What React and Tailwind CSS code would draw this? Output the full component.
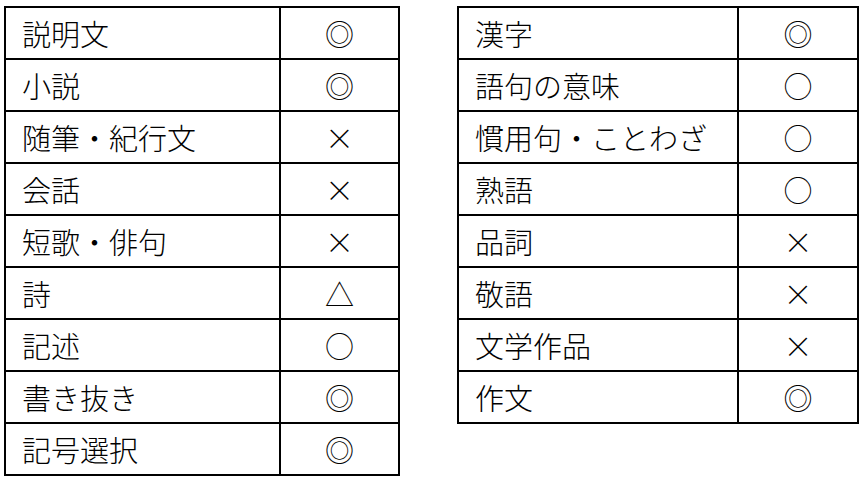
import React from "react";

const left = [
  ["説明文", "◎"],
  ["小説", "◎"],
  ["随筆・紀行文", "×"],
  ["会話", "×"],
  ["短歌・俳句", "×"],
  ["詩", "△"],
  ["記述", "○"],
  ["書き抜き", "◎"],
  ["記号選択", "◎"],
];

const right = [
  ["漢字", "◎"],
  ["語句の意味", "○"],
  ["慣用句・ことわざ", "○"],
  ["熟語", "○"],
  ["品詞", "×"],
  ["敬語", "×"],
  ["文学作品", "×"],
  ["作文", "◎"],
];

function Table({ rows, widthClass, col2Class }) {
  return (
    <div className={"border-2 border-black flex flex-col " + widthClass}>
      {rows.map(([label, mark], i) => (
        <div
          key={i}
          className={
            i === 0
              ? "flex h-[50px]"
              : "flex h-[52px] border-t-2 border-black"
          }
        >
          <div className="flex-1 flex items-center pl-4 text-[29px] leading-none font-light text-black">
            {label}
          </div>
          <div
            className={
              "border-l-2 border-black flex items-center justify-center text-[29px] leading-none font-light text-black " +
              col2Class
            }
          >
            {mark}
          </div>
        </div>
      ))}
    </div>
  );
}

export default function App() {
  return (
    <div className="w-[867px] h-[486px] bg-white flex items-start gap-[57px] pl-[4px] pt-[6px] font-['Noto_Sans_CJK_JP','Noto_Sans',sans-serif]">
      <Table rows={left} widthClass="w-[396px]" col2Class="w-[119px]" />
      <Table rows={right} widthClass="w-[402px]" col2Class="w-[120px]" />
    </div>
  );
}
